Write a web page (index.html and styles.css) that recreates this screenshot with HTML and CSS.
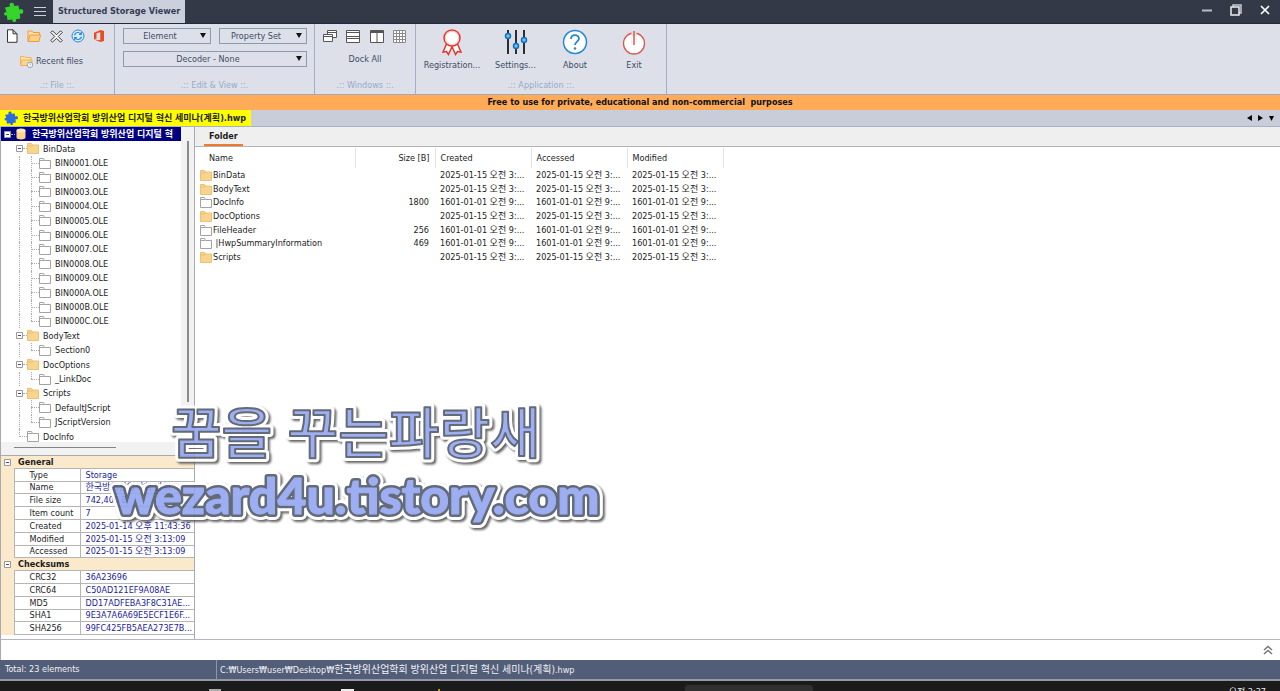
FILE: index.html
```html
<!DOCTYPE html>
<html lang="ko">
<head>
<meta charset="utf-8">
<title>Structured Storage Viewer</title>
<link rel="stylesheet" href="styles.css">
</head>
<body>
<svg class="defs" aria-hidden="true">
  <defs>
    <symbol id="puzzle" viewBox="0 0 20 20"><path d="M1 5.500 6 4.600C5.200 2.800 5.400 1 7.600.8c2.300-.1 2.800 1.500 2.100 3.200L14.500 3.500l.8 4.300c1.700-.9 3.900-.6 4 1.700 0 2.300-2 2.700-3.600 1.900l.6 5.100-4.600.8c.9 1.300.4 2.500-1.200 2.600-1.800.2-2.400-1-1.900-2.400l-5.100.6-.7-4.800c-1.400.6-2.600.1-2.700-1.400-.1-1.700 1.200-2.100 2.400-1.500z"/></symbol>
    <symbol id="folder" viewBox="0 0 12 11"><path d="M.5 10.500V.5h4l1 1.500h6v8.500z" fill="#f8d48c" stroke="#ebc07c"/><path d="M1 3h4l1-1" fill="none" stroke="#f0bd6c"/></symbol>
    <symbol id="stream" viewBox="0 0 12 11"><path d="M.5 10.500V.5h4l1 2h6v8z" fill="#fff" stroke="#a3a3a3"/><path d="M1 2.500h4" stroke="#a3a3a3"/></symbol>
    <symbol id="minus" viewBox="0 0 7 7"><path d="M.5.5h6v6h-6z" fill="#fff" stroke="#999"/><path d="M2 3.500h3" stroke="#3b4a94"/></symbol>
  </defs>
</svg>
<div class="app">
  <header class="titlebar">
    <svg class="logo"><use href="#puzzle"/></svg>
    <button class="menu" aria-label="Menu"><svg width="12" height="9" viewBox="0 0 12 9"><path d="M0 .5h12M0 4.500h12M0 8.500h12" stroke="#ccd0d9"/></svg></button>
    <h1 class="title">Structured Storage Viewer</h1>
    <div class="winbtns">
      <button aria-label="Minimize"><svg width="12" height="12" viewBox="0 0 12 12"><path d="M1 6.500h10" stroke="#b9bdc5" stroke-width="2"/></svg></button>
      <button aria-label="Restore"><svg width="12" height="12" viewBox="0 0 12 12"><path d="M3 3V1h8v8H9" fill="none" stroke="#c9ccd2" stroke-width="1.500"/><path d="M1 3h8v8H1z" fill="none" stroke="#eee" stroke-width="1.500"/></svg></button>
      <button aria-label="Close"><svg width="12" height="12" viewBox="0 0 12 12"><path d="m2 2 8 8M10 2 2 10" stroke="#fff" stroke-width="1.700"/></svg></button>
    </div>
  </header>

  <nav class="ribbon">
    <section class="group g-file">
      <div class="icons">
        <button aria-label="New"><svg width="12" height="14" viewBox="0 0 12 14"><path d="M1.500.8h5.500l4 4v8.500H1.500z M7 .8v4h4" fill="#fff" stroke="#333"/></svg></button>
        <button aria-label="Open"><svg width="14" height="14" viewBox="0 0 14 14"><path d="M1 12V2h4l1 1.500h6.500V6" fill="#ffe3ad" stroke="#f09a36"/><path d="M1 12.500 3 6h10.500l-1.500 6.500z" fill="#ffd18a" stroke="#f09a36"/></svg></button>
        <button aria-label="Close file"><svg width="13" height="13" viewBox="0 0 13 13"><path d="m2.500.8 4 4 4-4 1.700 1.700-4 4 4 4-1.700 1.700-4-4-4 4L.8 10.500l4-4-4-4z" fill="#fff" stroke="#333"/></svg></button>
        <button aria-label="Refresh"><svg width="14" height="14" viewBox="0 0 14 14" fill="none" stroke="#2b8ad8"><circle cx="7" cy="7" r="6" fill="#d9ecfb"/><path d="M3.500 6.300C4 4.200 5.300 3.500 7 3.500c1.400 0 2.200.6 3 1.600M10.300 3v2.500H8M10.500 7.700c-.5 2-1.800 2.800-3.500 2.800-1.400 0-2.200-.6-3-1.600M3.700 11V8.500H6" stroke-width="1.200"/></svg></button>
        <button aria-label="Office"><svg width="10" height="12" viewBox="0 0 10 12"><path d="M0 2.700 6.500 0 10 1v10l-3.500 1L0 9.500l6.300.7V2.300L2.500 3.200v5.300L0 9.500z" fill="#ea4a1f"/></svg></button>
      </div>
      <button class="recent"><svg width="13" height="13" viewBox="0 0 13 13"><path d="M.5 10.500V1.500h4l1 1h5.500V5" fill="#ffe3ad" stroke="#eeb25d"/><path d="M.5 10.500 2 5h10v5.500z" fill="#fbd591" stroke="#eeb25d"/><circle cx="10" cy="9.800" r="2.700" fill="#fff" stroke="#8fa3b6"/><path d="M10 8v2h1.300" fill="none" stroke="#8fa3b6" stroke-width=".7"/></svg>Recent files</button>
      <h2>.:: File ::.</h2>
    </section>
    <section class="group g-edit">
      <div class="combos">
        <button class="combo">Element</button>
        <button class="combo">Property Set</button>
        <div class="combo wide"><select aria-label="Decoder"><option>Decoder - None</option></select></div>
      </div>
      <h2>.:: Edit &amp; View ::.</h2>
    </section>
    <section class="group g-win">
      <div class="icons">
        <button aria-label="Cascade"><svg width="14" height="14" viewBox="0 0 14 14" fill="#fff" stroke="#555"><path d="M4.500 1.500h9v7h-9zM4.500 3.500h9"/><path d="M.5 5.500h9v7h-9zM.5 7.500h9"/></svg></button>
        <button aria-label="Tile horizontally"><svg width="14" height="14" viewBox="0 0 14 14" fill="#fff" stroke="#555"><path d="M.5 1.500h13v12H.5zM.5 3.500h13M.5 7.500h13M.5 9.500h13"/></svg></button>
        <button aria-label="Tile vertically"><svg width="14" height="14" viewBox="0 0 14 14" fill="#fff" stroke="#555"><path d="M.5 1.500h13v12H.5zM.5 3.500h13M7 1.500v12M.5 2.500h13"/></svg></button>
        <button aria-label="Grid"><svg width="13" height="13" viewBox="0 0 13 13" fill="#fff" stroke="#8a8a8a"><path d="M.5.5h12v12H.5zM3.500.5v12M6.500.5v12M9.500.5v12M.5 3.500h12M.5 6.500h12M.5 9.500h12"/></svg></button>
      </div>
      <button class="dock">Dock All</button>
      <h2>.:: Windows ::.</h2>
    </section>
    <section class="group g-app">
      <div class="bigs">
        <button><svg width="26" height="28" viewBox="0 0 26 28" fill="#fff" stroke="#e7362f" stroke-width="1.500"><path d="m7.500 16-3.500 8 3.500-.5 2 3 3.500-8 3.500 8 2-3 3.500.5-3.500-8"/><circle cx="13" cy="10" r="8"/><circle cx="13" cy="10" r="6.500" stroke="#f29a96" stroke-width=".5"/></svg>Registration...</button>
        <button><svg width="26" height="28" viewBox="0 0 26 28" fill="#69c3f5"><path d="M5 2v24M13 2v24M21 2v24" stroke="#1b1b1b" stroke-width="1.800"/><g stroke="#1370bd" stroke-width="1.500"><circle cx="5" cy="8" r="2.500"/><circle cx="13" cy="18" r="2.500"/><circle cx="21" cy="12" r="2.500"/></g></svg>Settings...</button>
        <button><svg width="26" height="28" viewBox="0 0 26 28" fill="none" stroke="#2489d1" stroke-width="1.500"><circle cx="13" cy="14" r="11.500" fill="#fff"/><path d="M9 11c0-5 8-5 8-.5 0 3-4 3.200-4 6.500" stroke-width="1.800"/><circle cx="13" cy="20.500" r=".6"/></svg>About</button>
        <button><svg width="26" height="28" viewBox="0 0 26 28" fill="none" stroke="#d9594f" stroke-width="1.300"><circle cx="13" cy="15.500" r="10.500" fill="#fff"/><path d="M13 3v13" stroke="#dde0e8" stroke-width="5"/><path d="M11 8h4v8h-4z" fill="#fff" stroke="none"/><path d="M13 3v14" stroke-width="1.500"/></svg>Exit</button>
      </div>
      <h2>.:: Application ::.</h2>
    </section>
  </nav>

  <p class="notice">Free to use for private, educational and non-commercial&nbsp; purposes</p>

  <div class="filetabs">
    <button class="filetab"><svg width="15" height="14"><use href="#puzzle"/></svg><span><span class="hangul">한국방위산업학회 방위산업 디지털 혁신 세미나(계획)</span>.hwp</span></button>
    <div class="tabnav">
      <button aria-label="Previous tab"><svg width="5" height="6"><path d="M5 0v6L0 3z"/></svg></button>
      <button aria-label="Next tab"><svg width="5" height="6"><path d="M0 0v6l5-3z"/></svg></button>
      <button aria-label="Tab list"><svg width="5" height="6"><path d="M0 1h5L2.500 6z"/></svg></button>
    </div>
  </div>

  <main class="main">
    <aside class="side">
      <div class="treebox">
        <ul class="tree">
          <li class="l0"><svg class="box"><use href="#minus"/></svg><i></i><svg class="db" width="12" height="12" viewBox="0 0 12 12"><path d="M1.500 2.500v7c0 2.600 9 2.600 9 0v-7" fill="#ffd28d"/><ellipse cx="6" cy="2.500" rx="4.500" ry="2" fill="#ffe6bd"/></svg><span>한국방위산업학회 방위산업 디지털 혁</span></li>
          <li class="l1"><svg class="box"><use href="#minus"/></svg><i></i><svg class="ic"><use href="#folder"/></svg><span>BinData</span></li>
          <li class="l2"><i></i><svg class="ic"><use href="#stream"/></svg><span>BIN0001.OLE</span></li>
          <li class="l2"><i></i><svg class="ic"><use href="#stream"/></svg><span>BIN0002.OLE</span></li>
          <li class="l2"><i></i><svg class="ic"><use href="#stream"/></svg><span>BIN0003.OLE</span></li>
          <li class="l2"><i></i><svg class="ic"><use href="#stream"/></svg><span>BIN0004.OLE</span></li>
          <li class="l2"><i></i><svg class="ic"><use href="#stream"/></svg><span>BIN0005.OLE</span></li>
          <li class="l2"><i></i><svg class="ic"><use href="#stream"/></svg><span>BIN0006.OLE</span></li>
          <li class="l2"><i></i><svg class="ic"><use href="#stream"/></svg><span>BIN0007.OLE</span></li>
          <li class="l2"><i></i><svg class="ic"><use href="#stream"/></svg><span>BIN0008.OLE</span></li>
          <li class="l2"><i></i><svg class="ic"><use href="#stream"/></svg><span>BIN0009.OLE</span></li>
          <li class="l2"><i></i><svg class="ic"><use href="#stream"/></svg><span>BIN000A.OLE</span></li>
          <li class="l2"><i></i><svg class="ic"><use href="#stream"/></svg><span>BIN000B.OLE</span></li>
          <li class="l2 last"><i></i><svg class="ic"><use href="#stream"/></svg><span>BIN000C.OLE</span></li>
          <li class="l1"><svg class="box"><use href="#minus"/></svg><i></i><svg class="ic"><use href="#folder"/></svg><span>BodyText</span></li>
          <li class="l2 last"><i></i><svg class="ic"><use href="#stream"/></svg><span>Section0</span></li>
          <li class="l1"><svg class="box"><use href="#minus"/></svg><i></i><svg class="ic"><use href="#folder"/></svg><span>DocOptions</span></li>
          <li class="l2 last"><i></i><svg class="ic"><use href="#stream"/></svg><span>_LinkDoc</span></li>
          <li class="l1"><svg class="box"><use href="#minus"/></svg><i></i><svg class="ic"><use href="#folder"/></svg><span>Scripts</span></li>
          <li class="l2"><i></i><svg class="ic"><use href="#stream"/></svg><span>DefaultJScript</span></li>
          <li class="l2 last"><i></i><svg class="ic"><use href="#stream"/></svg><span>JScriptVersion</span></li>
          <li class="l1 leaf"><i></i><svg class="ic"><use href="#stream"/></svg><span>DocInfo</span></li>
        </ul>
        <div class="vscroll"><div></div></div>
      </div>
      <div class="hscroll"><div></div></div>
      <table class="props">
        <colgroup><col class="gutter"><col><col class="val"></colgroup>
        <tbody>
          <tr class="cat"><td><svg class="box"><use href="#minus"/></svg></td><th colspan="2">General</th></tr>
          <tr><td></td><th>Type</th><td>Storage</td></tr>
          <tr><td></td><th>Name</th><td>한국방위산업학회 방위...</td></tr>
          <tr><td></td><th>File size</th><td>742,400 B</td></tr>
          <tr><td></td><th>Item count</th><td>7</td></tr>
          <tr><td></td><th>Created</th><td>2025-01-14 오후 11:43:36</td></tr>
          <tr><td></td><th>Modified</th><td>2025-01-15 오전 3:13:09</td></tr>
          <tr><td></td><th>Accessed</th><td>2025-01-15 오전 3:13:09</td></tr>
          <tr class="cat"><td><svg class="box"><use href="#minus"/></svg></td><th colspan="2">Checksums</th></tr>
          <tr><td></td><th>CRC32</th><td>36A23696</td></tr>
          <tr><td></td><th>CRC64</th><td>C50AD121EF9A08AE</td></tr>
          <tr><td></td><th>MD5</th><td>DD17ADFEBA3F8C31AE...</td></tr>
          <tr><td></td><th>SHA1</th><td>9E3A7A6A69E5ECF1E6F...</td></tr>
          <tr><td></td><th>SHA256</th><td>99FC425FB5AEA273E7B...</td></tr>
        </tbody>
      </table>
    </aside>
    <section class="content">
      <div class="viewtabs"><button>Folder</button></div>
      <table class="list">
        <thead><tr><th class="c-name">Name</th><th class="num">Size [B]</th><th>Created</th><th>Accessed</th><th>Modified</th></tr></thead>
        <tbody>
          <tr><td><svg class="ic"><use href="#folder"/></svg>BinData</td><td class="num"></td><td>2025-01-15 오전 3:...</td><td>2025-01-15 오전 3:...</td><td>2025-01-15 오전 3:...</td></tr>
          <tr><td><svg class="ic"><use href="#folder"/></svg>BodyText</td><td class="num"></td><td>2025-01-15 오전 3:...</td><td>2025-01-15 오전 3:...</td><td>2025-01-15 오전 3:...</td></tr>
          <tr><td><svg class="ic"><use href="#stream"/></svg>DocInfo</td><td class="num">1800</td><td>1601-01-01 오전 9:...</td><td>1601-01-01 오전 9:...</td><td>1601-01-01 오전 9:...</td></tr>
          <tr><td><svg class="ic"><use href="#folder"/></svg>DocOptions</td><td class="num"></td><td>2025-01-15 오전 3:...</td><td>2025-01-15 오전 3:...</td><td>2025-01-15 오전 3:...</td></tr>
          <tr><td><svg class="ic"><use href="#stream"/></svg>FileHeader</td><td class="num">256</td><td>1601-01-01 오전 9:...</td><td>1601-01-01 오전 9:...</td><td>1601-01-01 오전 9:...</td></tr>
          <tr><td><svg class="ic"><use href="#stream"/></svg>&nbsp;|HwpSummaryInformation</td><td class="num">469</td><td>1601-01-01 오전 9:...</td><td>1601-01-01 오전 9:...</td><td>1601-01-01 오전 9:...</td></tr>
          <tr><td><svg class="ic"><use href="#folder"/></svg>Scripts</td><td class="num"></td><td>2025-01-15 오전 3:...</td><td>2025-01-15 오전 3:...</td><td>2025-01-15 오전 3:...</td></tr>
        </tbody>
      </table>
    </section>
    <svg class="mark" viewBox="0 0 510 140" width="510" height="140">
      <defs>
        <text id="mark-ko" x="68" y="53">꿈을 꾸는파랑새</text>
        <text id="mark-url" x="12" y="114">wezard4u.tistory.com</text>
      </defs>
      <g class="ko"><use class="halo" href="#mark-ko"/><use class="ink" href="#mark-ko"/></g>
      <g class="url"><use class="halo" href="#mark-url"/><use class="edge" href="#mark-url"/><use class="ink" href="#mark-url"/></g>
    </svg>
  </main>

  <div class="log"><button aria-label="Expand"><svg width="10" height="10" viewBox="0 0 10 10"><path d="m1 5 4-3.500L9 5M1 9l4-3.500L9 9" fill="none" stroke="#777" stroke-width="1.500"/></svg></button></div>
  <footer class="status"><span class="total">Total: 23 elements</span><span class="path">C:₩Users₩user₩Desktop₩<span class="hangul">한국방위산업학회 방위산업 디지털 혁신 세미나(계획)</span>.hwp</span></footer>
  <div class="taskbar"><i class="t1"></i><i class="t2"></i><i class="t3"></i><span class="task"></span><time>오전 3:37</time></div>
</div>
</body>
</html>
```
FILE: styles.css
```css
* { box-sizing: border-box; margin: 0; padding: 0; }
body {
  font: 9px/14px "DejaVu Sans Condensed", "DejaVu Sans", "Noto Sans CJK KR", sans-serif;
  color: #1c1c1c;
  background: #fff;
  overflow: hidden;
}
button, select { font: inherit; color: inherit; background: none; border: 0; border-radius: 0; }
svg { display: block; flex: none; }
ul { list-style: none; }
.hangul { font-size: 10px; }
.defs { position: absolute; width: 0; height: 0; }
.app { height: 100vh; display: flex; flex-direction: column; }

.titlebar { height: 24px; flex: none; display: flex; background: #343947; border-bottom: 1px solid #23293a; }
.logo { width: 20px; height: 20px; margin: 2px 10px 0 4px; fill: #35d52c; }
.menu { width: 19px; display: grid; place-items: center start; }
.title { background: #ccd0dc; color: #343d56; font-size: 9px; font-weight: bold; line-height: 22px; padding: 0 5px; white-space: nowrap; }
.winbtns { margin-left: auto; display: flex; gap: 17px; padding-right: 9px; }
.winbtns button { display: flex; align-items: center; height: 20px; }

.ribbon { height: 71px; flex: none; display: flex; background: #dde0e8; border-bottom: 1px solid #a3abb5; color: #3d4c66; }
.group { border-right: 1px solid #a0aec6; display: flex; flex-direction: column; }
.group h2 { margin-top: auto; padding-bottom: 2px; text-align: center; font-size: 9px; font-weight: normal; color: #96abc9; }
.g-file { width: 115px; }
.g-edit { width: 200px; }
.g-win { width: 101px; }
.g-app { width: 251px; }
.icons { display: flex; align-items: center; justify-content: space-between; height: 16px; margin-top: 4px; }
.g-file .icons { padding: 0 10px 0 6px; }
.g-win .icons { padding: 0 9px 0 8px; }
.recent { display: flex; align-items: center; gap: 3px; margin: 10px 0 0 20px; white-space: nowrap; }
.dock { margin-top: 8px; }
.combos { display: grid; grid-template-columns: 1fr 1fr; gap: 7px 8px; padding: 4px 7px 0 8px; }
.combo { position: relative; height: 16px; border: 1px solid #8b9bb5; padding-right: 14px; line-height: 14px; text-align: center; }
.combo::after { content: ""; position: absolute; right: 4px; top: 4px; border: solid transparent; border-width: 5px 3px 0; border-top-color: #111; }
.combo.wide { grid-column: 1 / 3; }
.combo select { appearance: none; display: block; width: 100%; height: 14px; text-align: center; text-align-last: center; }
.bigs { display: grid; grid-template-columns: 70px 57px 62px 56px; padding: 4px 0 0 1px; }
.bigs button { display: flex; flex-direction: column; align-items: center; gap: 2px; white-space: nowrap; }

.notice { height: 15px; flex: none; background: #ffab58; color: #111; text-align: center; font-weight: bold; line-height: 15px; }
.filetabs { height: 17px; flex: none; display: flex; justify-content: space-between; background: #c9cdd9; border-bottom: 1px solid #aab1c1; }
.filetab { display: flex; align-items: center; gap: 4px; padding: 0 5px 0 4px; background: #ff0; font-weight: bold; white-space: nowrap; color: #222; }
.filetab svg { fill: #2d6be0; }
.filetab .hangul { font-size: 9px; }
.tabnav { display: flex; align-items: center; gap: 6px; padding-right: 6px; }

.main { position: relative; flex: 1; min-height: 0; display: flex; border-bottom: 1px solid #b4b5c0; }
.side { width: 195px; flex: none; display: flex; flex-direction: column; border: 1px solid #a9a9b0; border-width: 0 1px; }
.treebox { flex: 1; min-height: 0; display: flex; overflow: hidden; }
.tree { flex: 1; min-width: 0; }
.tree li { height: 14px; display: flex; align-items: center; position: relative; white-space: nowrap; overflow: hidden; }
.tree li:nth-child(5n), .tree li:nth-child(5n+2) { height: 15px; }
.box { width: 7px; height: 7px; }
.ic { width: 12px; height: 11px; }
.tree i { border-top: 1px dotted #aaa; }
.tree .l0 { background: #000080; color: #fff; font-weight: bold; padding-left: 3px; }
.l0 i { width: 4px; }
.l0 span { padding-left: 5px; }
.l1 { padding-left: 15px; }
.l1 i { width: 4px; }
.l1 span, .l2 span { padding-left: 4px; }
.l1.leaf { padding-left: 18px; }
.l1.leaf i { width: 8px; }
.l2 { padding-left: 30px; }
.l2 i { width: 8px; }
.l2::before, .l2::after, .leaf::before { content: ""; position: absolute; top: 0; bottom: 0; left: 18px; border-left: 1px dotted #aaa; }
.l2::after { left: 30px; }
.l2.last::after, .leaf::before { bottom: 50%; }
.vscroll { width: 13px; background: #f2f2f2; padding: 14px 5px 40px 6px; display: flex; }
.vscroll div { width: 2px; background: #8b8b8b; }
.hscroll { height: 14px; flex: none; background: #f2f2f2; border-bottom: 1px solid #a9a9b0; padding: 5px 78px 0 13px; }
.hscroll div { height: 1px; background: #858585; }

.props { width: 100%; margin-bottom: 4px; border-collapse: collapse; table-layout: fixed; line-height: 12px; }
.props .gutter { width: 13px; }
.props .val { width: 113px; }
.props tr { height: 13px; }
.props tr:nth-child(5n+3) { line-height: 11px; height: 12px; }
.props th, .props td { border-bottom: 1px solid #b5b5b5; text-align: left; font-weight: normal; white-space: nowrap; }
.props td:first-child { background: #fbe9cb; border: 0; border-right: 1px solid #b5b5b5; }
.props th { padding-left: 15px; }
.props td:last-child { padding-left: 4px; border-left: 1px solid #b5b5b5; color: #1b1b9b; }
.props .cat td { border: 0; padding-left: 3px; }
.props .cat th { background: #fbe9cb; font-weight: bold; padding-left: 4px; }

.content { flex: 1; min-width: 0; }
.viewtabs { height: 20px; background: #efefef; border-bottom: 1px solid #b4b4b4; padding-left: 9px; }
.viewtabs button { height: 19px; padding: 0 5px; font-weight: bold; border-bottom: 2px solid #ee7a30; }
.list { border-collapse: collapse; table-layout: fixed; width: 528px; line-height: 13px; margin-top: 1px; }
.list th { width: 96px; height: 20px; text-align: left; font-weight: normal; padding-left: 5px; border-right: 1px solid #e2e2e2; }
.list th.c-name { width: 160px; padding-left: 14px; }
.list th.num { width: 80px; padding-right: 5px; }
.list .num { text-align: right; }
.list td { height: 14px; padding-left: 5px; white-space: nowrap; }
.list td.num { padding-right: 6px; }
.list td:first-child { padding-left: 5px; }
.list td .ic { display: inline-block; vertical-align: middle; margin-right: 1px; }
.list tr:nth-child(3n) td { height: 13px; }

.mark { position: absolute; left: 103px; top: 273px; pointer-events: none; stroke-linejoin: round; opacity: .9; }
.mark .ko { font: 500 55px "Noto Sans CJK KR", sans-serif; }
.mark .url { font: 900 50px Lato, sans-serif; }
.mark .halo { fill: #fff; stroke: #fff; stroke-width: 8px; filter: drop-shadow(2px 2px 1px #555); }
.mark .ink { fill: #94a6f2; stroke: #535b68; stroke-width: 2px; }
.mark .url .halo { stroke-width: 12px; }
.mark .url .edge { fill: #535b68; stroke: #535b68; stroke-width: 6px; }
.mark .url .ink { stroke: #94a6f2; stroke-width: 1px; }

.log { height: 20px; flex: none; display: flex; justify-content: flex-end; align-items: center; padding-right: 7px; border-left: 1px solid #a9a9b0; }
.status { height: 21px; flex: none; display: flex; background: #525d78; color: #eef0f5; line-height: 19px; border-bottom: 2px solid #9199a9; }
.total { width: 217px; padding-left: 5px; border-right: 1px solid #8e96aa; }
.path { padding-left: 3px; white-space: nowrap; }
.taskbar { height: 10px; flex: none; overflow: hidden; background: #1b1b1b; display: flex; color: #eee; }
.taskbar i { height: 2px; align-self: flex-end; }
.t1 { width: 12px; margin-left: 209px; background: #aaa; }
.t2 { width: 13px; margin-left: 120px; background: #eee; }
.t3 { width: 2px; margin-left: 84px; background: #b59a20; }
.task { width: 128px; margin: 4px 0 0 245px; background: #303030; border-radius: 3px 3px 0 0; }
.taskbar time { margin: 4px 14px 0 auto; }
```
